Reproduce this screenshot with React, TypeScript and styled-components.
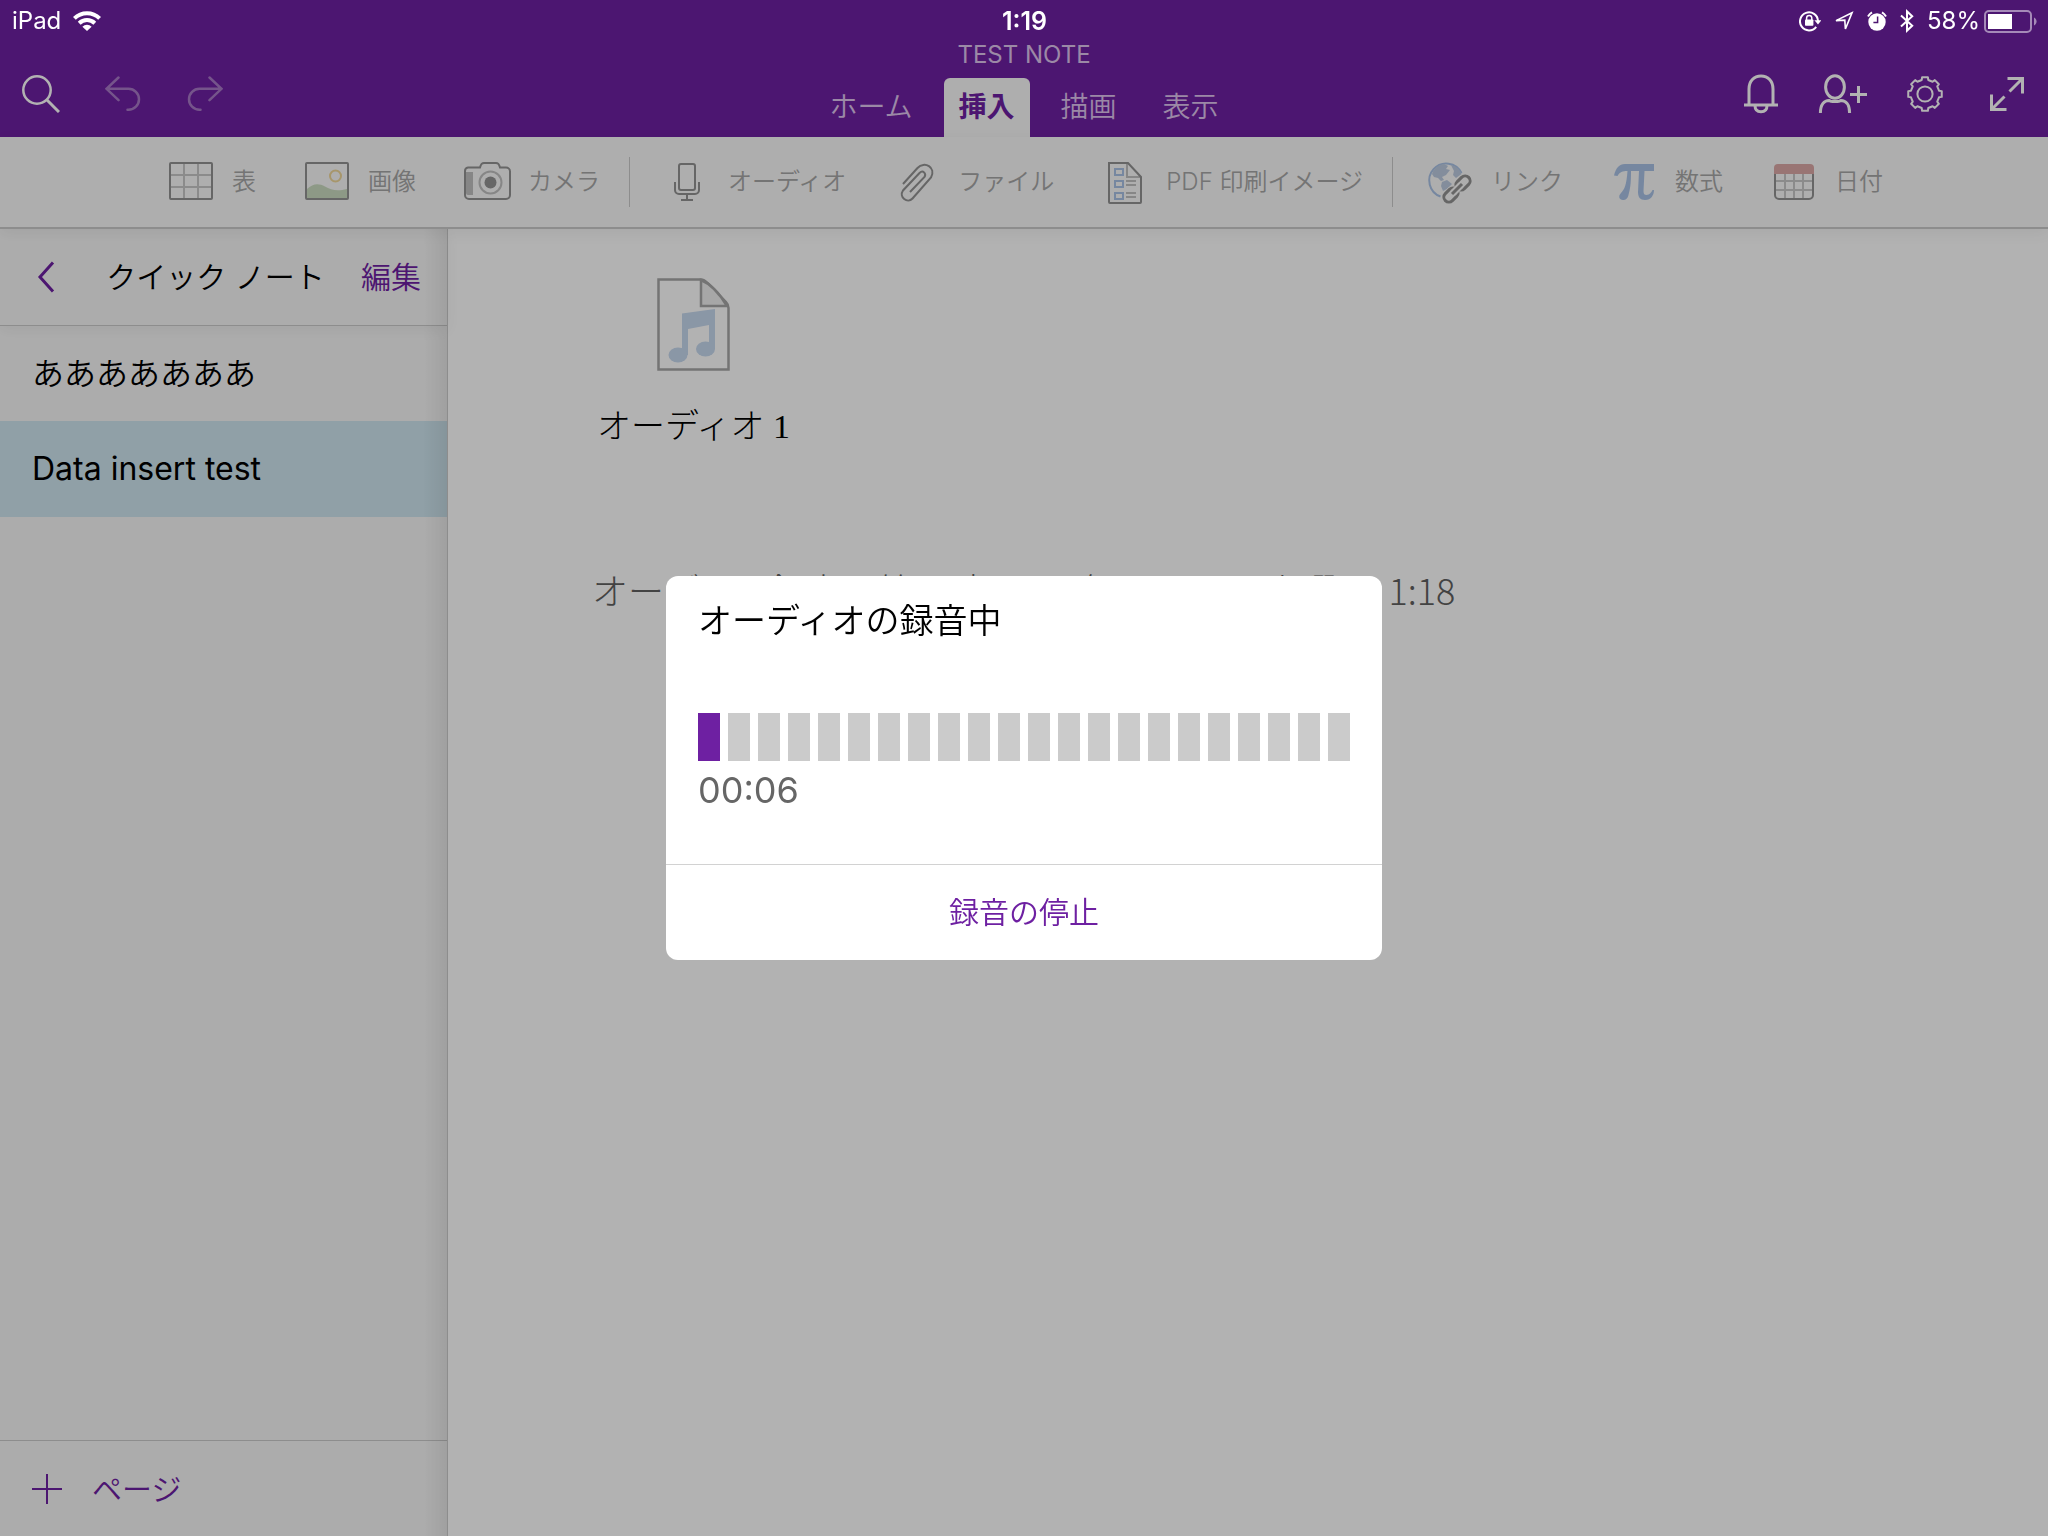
import React from 'react';
import styled, { createGlobalStyle, css } from 'styled-components';

const sans = `Inter, "Noto Sans CJK JP", sans-serif`;

const color = {
  brand: '#6e20a2',
  bar: '#f9f9f9',
  side: '#f7f7f7',
  line: '#cbcbcb',
  muted: '#a6a6a6',
  stroke: '#929292',
  blue: '#a9c2e6',
};

const GlobalStyle = createGlobalStyle`
  *, *::before, *::after { box-sizing: border-box; }
  body { margin: 0; background: #fff; font-family: ${sans}; font-weight: 400; color: #000; }
  button { border: 0; padding: 0; background: none; font: inherit; color: inherit; cursor: pointer; }
  h1, h2, p, ul { margin: 0; padding: 0; font-weight: inherit; }
  svg { display: block; flex: none; }
`;

const Screen = styled.div`
  min-height: 100vh;
  display: flex;
  flex-direction: column;
`;

/* Status bar */
const StatusBar = styled.div`
  position: fixed;
  inset: 0 0 auto 0;
  z-index: 20;
  height: 42px;
  padding: 0 11px 0 12px;
  display: grid;
  grid-template-columns: 1fr auto 1fr;
  align-items: center;
  color: #fff;
  font-size: 24px;
  line-height: 32px;
`;
const StatusGroup = styled.div<{ $end?: boolean; $gap: number }>`
  display: flex;
  align-items: center;
  gap: ${(p) => p.$gap}px;
  justify-content: ${(p) => (p.$end ? 'flex-end' : 'flex-start')};
`;
const Clock = styled.time`
  font-size: 25px;
  font-weight: 600;
`;

/* Header */
const Header = styled.header`
  height: 137px;
  padding-top: 40px;
  background: ${color.brand};
  display: grid;
  grid-template-columns: 1fr auto 1fr;
`;
const HeaderActions = styled.div<{ $end?: boolean }>`
  display: flex;
  align-items: flex-end;
  justify-content: ${(p) => (p.$end ? 'flex-end' : 'flex-start')};
`;
const HeaderButton = styled.button`
  width: 82px;
  height: 86px;
  display: flex;
  align-items: center;
  justify-content: center;
  color: #fff;
  &:disabled { opacity: 0.4; }
`;
const HeaderCenter = styled.div`
  display: flex;
  flex-direction: column;
  justify-content: space-between;
  align-items: center;
`;
const NoteTitle = styled.h1`
  font-size: 24px;
  line-height: 30px;
  color: #dfc4ee;
`;
const Tabs = styled.div`
  display: flex;
  gap: 16px;
`;
const Tab = styled.button<{ $active?: boolean }>`
  height: 59px;
  padding: 0 15px 2px;
  font-size: 28px;
  line-height: 40px;
  font-weight: 350;
  color: #dfc4ee;
  ${(p) =>
    p.$active &&
    css`
      background: ${color.bar};
      border-radius: 6px 6px 0 0;
      color: ${color.brand};
      font-weight: 700;
    `}
`;

/* Insert ribbon */
const Ribbon = styled.nav`
  position: relative;
  z-index: 2;
  height: 92px;
  padding-left: 4px;
  display: flex;
  align-items: center;
  justify-content: center;
  background: ${color.bar};
  border-bottom: 2px solid ${color.line};
  box-shadow: 0 4px 14px rgba(0, 0, 0, 0.06);
`;
const RibbonGroup = styled.div`
  display: flex;
  gap: 49px;
`;
const RibbonDivider = styled.span`
  width: 1px;
  height: 50px;
  margin: 0 35px 0 29px;
  background: ${color.line};
`;
const RibbonButton = styled.button`
  display: flex;
  align-items: center;
  gap: 19px;
  font-size: 24px;
  line-height: 36px;
  font-weight: 350;
  color: ${color.muted};
  white-space: nowrap;
`;

/* Body */
const Body = styled.div`
  flex: 1;
  display: flex;
`;
const Sidebar = styled.aside`
  position: relative;
  width: 448px;
  flex: none;
  display: flex;
  flex-direction: column;
  background: ${color.side};
  border-right: 1px solid ${color.line};
  font-weight: 350;
  &::after {
    content: '';
    position: absolute;
    inset: 0 0 0 auto;
    width: 24px;
    background: linear-gradient(to right, rgba(0, 0, 0, 0), rgba(0, 0, 0, 0.07));
    pointer-events: none;
  }
`;
const SideHeader = styled.div`
  height: 97px;
  padding: 0 26px;
  display: flex;
  align-items: center;
  border-bottom: 1px solid ${color.line};
  box-shadow: 0 4px 14px rgba(0, 0, 0, 0.05);
  font-size: 30px;
  line-height: 44px;
`;
const BackButton = styled.button`
  width: 40px;
  height: 44px;
  display: flex;
  align-items: center;
  justify-content: center;
  color: ${color.brand};
`;
const SideTitle = styled.h2`
  flex: 1;
  padding-left: 4px;
  font-size: 30px;
  text-align: center;
`;
const EditButton = styled.button`
  color: ${color.brand};
`;
const PageList = styled.ul`
  flex: 1;
  list-style: none;
`;
const PageButton = styled.button<{ $selected?: boolean }>`
  width: 100%;
  height: ${(p) => (p.$selected ? 96 : 95)}px;
  padding: 0 32px;
  text-align: left;
  font-size: 32px;
  line-height: 48px;
  font-weight: ${(p) => (p.$selected ? 400 : 350)};
  background: ${(p) => (p.$selected ? '#cee5ef' : 'transparent')};
`;
const AddPage = styled.button`
  height: 96px;
  padding: 0 32px;
  display: flex;
  align-items: center;
  gap: 30px;
  border-top: 1px solid ${color.line};
  color: ${color.brand};
  font-size: 30px;
  line-height: 44px;
`;

/* Note canvas */
const Canvas = styled.main`
  flex: 1;
  min-width: 0;
  padding: 49px 144px;
  display: flex;
  flex-direction: column;
  align-items: flex-start;
  font-family: "Noto Sans CJK JP", sans-serif;
  font-weight: 300;
`;
const Attachment = styled.figure`
  margin: 0 0 112px 5px;
  display: flex;
  flex-direction: column;
  align-items: center;
  gap: 31px;
`;
const Caption = styled.figcaption`
  font-family: "Liberation Serif", "Noto Sans CJK JP", serif;
  font-size: 34px;
  line-height: 50px;
`;
const Stamp = styled.p`
  font-size: 36px;
  line-height: 50px;
  color: #606060;
  white-space: nowrap;
`;
const StampTime = styled.time`
  margin-left: 8px;
`;

/* Recording dialog */
const Backdrop = styled.div`
  position: fixed;
  inset: 0;
  z-index: 10;
  display: flex;
  align-items: center;
  justify-content: center;
  background: rgba(0, 0, 0, 0.3);
`;
const Dialog = styled.section`
  width: 716px;
  max-width: 90vw;
  background: #fff;
  border-radius: 12px;
  overflow: hidden;
`;
const DialogBody = styled.div`
  padding: 20px 32px 50px;
`;
const DialogTitle = styled.h2`
  font-size: 34px;
  line-height: 50px;
  font-weight: 350;
`;
const Meter = styled.div`
  display: flex;
  gap: 8px;
  height: 48px;
  margin: 67px 0 5px;
`;
const Bar = styled.span<{ $on?: boolean }>`
  flex: 1;
  background: ${(p) => (p.$on ? color.brand : '#cbcbcb')};
`;
const Elapsed = styled.p`
  font-size: 36px;
  line-height: 48px;
  color: #666;
`;
const StopButton = styled.button`
  width: 100%;
  height: 96px;
  padding-bottom: 2px;
  border-top: 1px solid #d2d2d2;
  color: ${color.brand};
  font-size: 30px;
  line-height: 44px;
  font-weight: 350;
`;

const line = { fill: 'none', stroke: 'currentColor', strokeWidth: 2.5 } as const;

const WifiIcon = () => (
  <svg width="28" height="20" viewBox="0 0 28 20" fill="none" stroke="#fff" strokeWidth="4">
    <path d="M1.4 7.4a18 18 0 0 1 25.2 0M6.2 12.2a11.2 11.2 0 0 1 15.6 0" />
    <path d="M14 20l-4.6-4.3a6.6 6.6 0 0 1 9.2 0z" fill="#fff" stroke="none" />
  </svg>
);
const LockIcon = () => (
  <svg width="22" height="22" viewBox="0 0 22 22" fill="none" stroke="#fff" strokeWidth="2">
    <path d="M17.2 16.8A9 9 0 1 1 19 11" />
    <path d="M15.4 10.2h7L19 14.6z" fill="#fff" stroke="none" />
    <rect x="6" y="9.5" width="8.4" height="6.2" rx="0.8" fill="#fff" stroke="none" />
    <path d="M7.6 10V8a2.6 2.6 0 0 1 5.2 0v2" strokeWidth="1.5" />
  </svg>
);
const LocationIcon = () => (
  <svg width="20" height="20" viewBox="0 0 20 20" fill="none" stroke="#fff" strokeWidth="1.6">
    <path d="M18 1.800L2 9.600l8.800-.4.600 8.800z" strokeLinejoin="miter" />
  </svg>
);
const AlarmIcon = () => (
  <svg width="20" height="20" viewBox="0 0 20 20">
    <circle cx="10" cy="11" r="8.7" fill="#fff" />
    <path d="M1 5.4a12 12 0 0 1 4-4M19 5.4a12 12 0 0 0-4-4" fill="none" stroke="#fff" strokeWidth="2" />
    <path d="M10.6 5.6v6H6.4" fill="none" stroke="#4d1671" strokeWidth="1.5" />
  </svg>
);
const BluetoothIcon = () => (
  <svg width="14" height="24" viewBox="0 0 14 24" fill="none" stroke="#fff" strokeWidth="2">
    <path d="M1 6.6l11.2 10.2L7 21.6V2.4l5.2 4.8L1 17.4" />
  </svg>
);
const BatteryIcon = () => (
  <svg width="53" height="23" viewBox="0 0 53 23">
    <rect x="1" y="1" width="46" height="21" rx="4" fill="none" stroke="#a58ab8" strokeWidth="2" />
    <rect x="4" y="4" width="24" height="15" fill="#fff" />
    <path d="M50 7.5c3.4 1.6 3.4 6.4 0 8z" fill="#a58ab8" />
  </svg>
);
const SearchIcon = () => (
  <svg width="38" height="38" viewBox="0 0 38 38" {...line}>
    <circle cx="15" cy="15" r="13.7" />
    <path d="M25 25l12 12" strokeWidth="3" />
  </svg>
);
const UndoIcon = ({ flip }: { flip?: boolean }) => (
  <svg width="36" height="36" viewBox="0 0 36 36" {...line} strokeLinecap="round">
    <g transform={flip ? 'matrix(-1 0 0 1 36 0)' : undefined}>
      <path d="M13.5 1.5L1.5 12.8l12 11.4M1.5 12.8H23.5a10.5 10.5 0 0 1 0 21h-1" />
    </g>
  </svg>
);
const BellIcon = () => (
  <svg width="36" height="40" viewBox="0 0 36 40" {...line} strokeWidth={3}>
    <path d="M1 31h34M6 31V15C6 7 11 2 18 2s12 5 12 13v16" />
    <path d="M12 31.5c0 4 2.4 6.2 6 6.2s6-2.2 6-6.2" />
  </svg>
);
const PersonIcon = () => (
  <svg width="50" height="40" viewBox="0 0 50 40" {...line} strokeWidth={3}>
    <ellipse cx="17" cy="13" rx="9.4" ry="11.2" />
    <path d="M2.4 39c0-9 4-12.6 8.6-12.6 2 1.6 10 1.6 12 0 4.600 0 8.600 3.600 8.600 12.600M32 20.500h17M40.500 12v17" />
  </svg>
);

const gearPath = (() => {
  const pts: string[] = [];
  const teeth = 8;
  for (let i = 0; i < teeth; i += 1) {
    const a = (i * 2 * Math.PI) / teeth - Math.PI / 2;
    const steps: [number, number][] = [
      [-0.23, 14.4],
      [-0.17, 17],
      [0.17, 17],
      [0.23, 14.4],
    ];
    steps.forEach(([d, r]) => {
      pts.push(`${(19 + r * Math.cos(a + d)).toFixed(2)} ${(19 + r * Math.sin(a + d)).toFixed(2)}`);
    });
  }
  return `M${pts.join('L')}Z`;
})();
const GearIcon = () => (
  <svg width="38" height="38" viewBox="0 0 38 38" {...line} strokeWidth={2} strokeLinejoin="round">
    <path d={gearPath} />
    <circle cx="19" cy="19" r="7.600" />
  </svg>
);
const ExpandIcon = () => (
  <svg width="36" height="36" viewBox="0 0 36 36" {...line} strokeWidth={3}>
    <path d="M18.500 2.500h15v15M33 3L20.500 15.500M2.500 18.500v15h15M3 33l12.500-12.500" />
  </svg>
);
const BackIcon = () => (
  <svg width="18" height="32" viewBox="0 0 18 32" {...line} strokeWidth={3}>
    <path d="M16 1.500L3 16l13 14.500" />
  </svg>
);
const PlusIcon = () => (
  <svg width="30" height="30" viewBox="0 0 30 30" {...line} strokeWidth={2}>
    <path d="M15 0v30M0 15h30" />
  </svg>
);

const Glyph = ({ children }: { children: React.ReactNode }) => (
  <svg width="44" height="44" viewBox="0 0 44 44" fill="none" stroke={color.stroke} strokeWidth="2" overflow="visible">
    {children}
  </svg>
);
const TableIcon = () => (
  <Glyph>
    <path d="M15 4v34M29 4v34M2 15h40M2 27h40" stroke="#c8c8c8" />
    <rect x="1" y="3" width="42" height="36" rx="1" />
  </Glyph>
);
const ImageIcon = () => (
  <Glyph>
    <path d="M2 29c6-6 12-6 18-2.500s12 5 22 2.500v10H2z" fill="#cbdcc0" stroke="none" />
    <circle cx="30.500" cy="16" r="5.500" stroke="#f0d79a" />
    <rect x="1" y="3" width="42" height="36" rx="1" />
  </Glyph>
);
const CameraIcon = () => (
  <Glyph>
    <path d="M1 12h7v23H3a2 2 0 0 1-2-2z" fill="#c0c0c0" stroke="none" />
    <path d="M3 7.500h12c1-4 2-4.500 4-4.500h12c2 0 3 .5 4 4.500h6a4 4 0 0 1 4 4V35a4 4 0 0 1-4 4H4a4 4 0 0 1-4-4V11a3.500 3.500 0 0 1 3-3.500z" />
    <circle cx="25.500" cy="22.500" r="11" stroke="#c0c0c0" />
    <circle cx="25.500" cy="22.500" r="6" fill={color.stroke} stroke="none" />
  </Glyph>
);
const MicIcon = () => (
  <Glyph>
    <rect x="14" y="4" width="16" height="26" rx="2" />
    <path d="M10 22v8a4 4 0 0 0 4 4h16a4 4 0 0 0 4-4v-8M22 34v6M16 40h12" />
  </Glyph>
);
const ClipIcon = () => (
  <Glyph>
    <path d="M8 24L22.500 8c7-7.500 19-.5 13.500 9.500L17.500 38.500c-5 5.500-14-1.500-9.500-8L24.500 13c3.500-3.500 7 .5 5 4L15 32" />
  </Glyph>
);
const PdfIcon = () => (
  <Glyph>
    <path d="M24 4v13h13M23 21h10M23 25h10M23 33h10M23 37h10" stroke="#c0c0c0" />
    <path d="M6 3h19l13 14v25a1 1 0 0 1-1 1H7a1 1 0 0 1-1-1z" />
    <path d="M12 9h8v6h-8zM12 21h8v6h-8zM12 33h8v6h-8z" stroke={color.blue} />
  </Glyph>
);
const LinkIcon = () => (
  <Glyph>
    <path d="M12.500 36.500A17 17 0 1 1 33.500 13" stroke={color.blue} />
    <path d="M4 14c2-6 7-9.500 12-10l4 2-2 3 4 1-4 5-4 2 2 3-3 1-3-3-4-1zM14 22l5-2 5 4-5 5-4 2-2-5zM23 5c5 1 9 4 10.500 9L28 18l-3-3 1-4z" fill="#bccbe0" stroke="none" />
    <g stroke={color.bar} strokeWidth="7">
      <rect x="-7" y="-4" width="14" height="9" rx="4" transform="translate(23.500 35) rotate(-45)" />
      <rect x="-7" y="-4" width="14" height="9" rx="4" transform="translate(35 23.500) rotate(-45)" />
    </g>
    <g strokeWidth="3">
      <rect x="-8" y="-5" width="16" height="10" rx="5" transform="translate(23 35) rotate(-45)" />
      <rect x="-8" y="-5" width="16" height="10" rx="5" transform="translate(35 23) rotate(-45)" />
      <path d="M25 33L33 25" stroke={color.bar} strokeWidth="7" />
      <path d="M24 34L34 24" />
    </g>
  </Glyph>
);
const PiIcon = () => (
  <Glyph>
    <path
      d="M2 15.500C4 8 7 4 13 4h29v7h-9.500l-1 20c0 3 1 4 3 4 3 0 5-3 6-5h1.500c0 5-3 10-9 10-5 0-7-3-7-8l1-21h-8c0 14-1 18-2.500 24-1 4-3 5-5.500 5-4 0-5-4-2-7 3.500-3.500 5.500-8 6.500-22-5 0-8 1-10 5z"
      fill={color.blue}
      stroke="none"
    />
  </Glyph>
);
const CalendarIcon = () => (
  <Glyph>
    <path d="M13 14v24M22 14v24M31 14v24M4 21h36M4 30h36" stroke="#c8c8c8" />
    <path d="M3 13v22a4 4 0 0 0 4 4h30a4 4 0 0 0 4-4V13" />
    <path d="M2 14V8a4 4 0 0 1 4-4h32a4 4 0 0 1 4 4v6z" fill="#dba8a6" stroke="none" />
  </Glyph>
);
const AudioFileIcon = () => (
  <svg width="74" height="93" viewBox="0 0 74 93" fill="none" stroke="#a6a6a6" strokeWidth="2.500">
    <path d="M1.500 1.500H44c3 0 5 2 7 4L69 24c2 2 2.500 4 2.500 6v61.500h-70z" />
    <path d="M44 2v26h26C64 18 54 6 44 2z" fill="#efefef" />
    <path d="M25 35.500L58 31v40H52V47l-21 4v26h-6z" fill="#c6d8ee" stroke="none" />
    <ellipse cx="21" cy="77" rx="9.500" ry="7.500" fill="#c6d8ee" stroke="none" />
    <ellipse cx="48.500" cy="71" rx="9.500" ry="7.500" fill="#c6d8ee" stroke="none" />
  </svg>
);

type Tool = { label: string; icon: React.ReactNode };
const toolGroups: Tool[][] = [
  [
    { label: '表', icon: <TableIcon /> },
    { label: '画像', icon: <ImageIcon /> },
    { label: 'カメラ', icon: <CameraIcon /> },
  ],
  [
    { label: 'オーディオ', icon: <MicIcon /> },
    { label: 'ファイル', icon: <ClipIcon /> },
    { label: 'PDF 印刷イメージ', icon: <PdfIcon /> },
  ],
  [
    { label: 'リンク', icon: <LinkIcon /> },
    { label: '数式', icon: <PiIcon /> },
    { label: '日付', icon: <CalendarIcon /> },
  ],
];
const tabs = ['ホーム', '挿入', '描画', '表示'];
const pages = ['あああああああ', 'Data insert test'];
const BAR_COUNT = 22;
const level = 1;

export default function App() {
  return (
    <Screen lang="ja">
      <GlobalStyle />
      <StatusBar>
        <StatusGroup $gap={12}>
          <span>iPad</span>
          <WifiIcon />
        </StatusGroup>
        <Clock>1:19</Clock>
        <StatusGroup $gap={13} $end>
          <LockIcon />
          <LocationIcon />
          <AlarmIcon />
          <BluetoothIcon />
          <StatusGroup $gap={4}>
            <span>58%</span>
            <BatteryIcon />
          </StatusGroup>
        </StatusGroup>
      </StatusBar>

      <Header>
        <HeaderActions>
          <HeaderButton aria-label="検索"><SearchIcon /></HeaderButton>
          <HeaderButton aria-label="元に戻す" disabled><UndoIcon /></HeaderButton>
          <HeaderButton aria-label="やり直し" disabled><UndoIcon flip /></HeaderButton>
        </HeaderActions>
        <HeaderCenter>
          <NoteTitle>TEST NOTE</NoteTitle>
          <Tabs role="tablist">
            {tabs.map((t) => (
              <Tab key={t} role="tab" aria-selected={t === '挿入'} $active={t === '挿入'}>{t}</Tab>
            ))}
          </Tabs>
        </HeaderCenter>
        <HeaderActions $end>
          <HeaderButton aria-label="通知"><BellIcon /></HeaderButton>
          <HeaderButton aria-label="共有"><PersonIcon /></HeaderButton>
          <HeaderButton aria-label="設定"><GearIcon /></HeaderButton>
          <HeaderButton aria-label="全画面"><ExpandIcon /></HeaderButton>
        </HeaderActions>
      </Header>

      <Ribbon>
        {toolGroups.map((group, i) => (
          <React.Fragment key={group[0].label}>
            {i > 0 && <RibbonDivider />}
            <RibbonGroup>
              {group.map((tool) => (
                <RibbonButton key={tool.label}>
                  {tool.icon}
                  <span>{tool.label}</span>
                </RibbonButton>
              ))}
            </RibbonGroup>
          </React.Fragment>
        ))}
      </Ribbon>

      <Body>
        <Sidebar>
          <SideHeader>
            <BackButton aria-label="戻る"><BackIcon /></BackButton>
            <SideTitle>クイック ノート</SideTitle>
            <EditButton>編集</EditButton>
          </SideHeader>
          <PageList>
            {pages.map((p, i) => (
              <li key={p}><PageButton $selected={i === 1}>{p}</PageButton></li>
            ))}
          </PageList>
          <AddPage>
            <PlusIcon />
            <span>ページ</span>
          </AddPage>
        </Sidebar>
        <Canvas>
          <Attachment>
            <AudioFileIcon />
            <Caption>オーディオ 1</Caption>
          </Attachment>
          <Stamp>
            オーディオ録音開始日時: 2017年11月21日火曜日 <StampTime>1:18</StampTime>
          </Stamp>
        </Canvas>
      </Body>

      <Backdrop>
        <Dialog role="dialog" aria-modal="true" aria-labelledby="recording-title">
          <DialogBody>
            <DialogTitle id="recording-title">オーディオの録音中</DialogTitle>
            <Meter role="meter" aria-label="入力レベル" aria-valuemin={0} aria-valuemax={BAR_COUNT} aria-valuenow={level}>
              {Array.from({ length: BAR_COUNT }, (_, i) => (
                <Bar key={i} $on={i < level} />
              ))}
            </Meter>
            <Elapsed>00:06</Elapsed>
          </DialogBody>
          <StopButton>録音の停止</StopButton>
        </Dialog>
      </Backdrop>
    </Screen>
  );
}
